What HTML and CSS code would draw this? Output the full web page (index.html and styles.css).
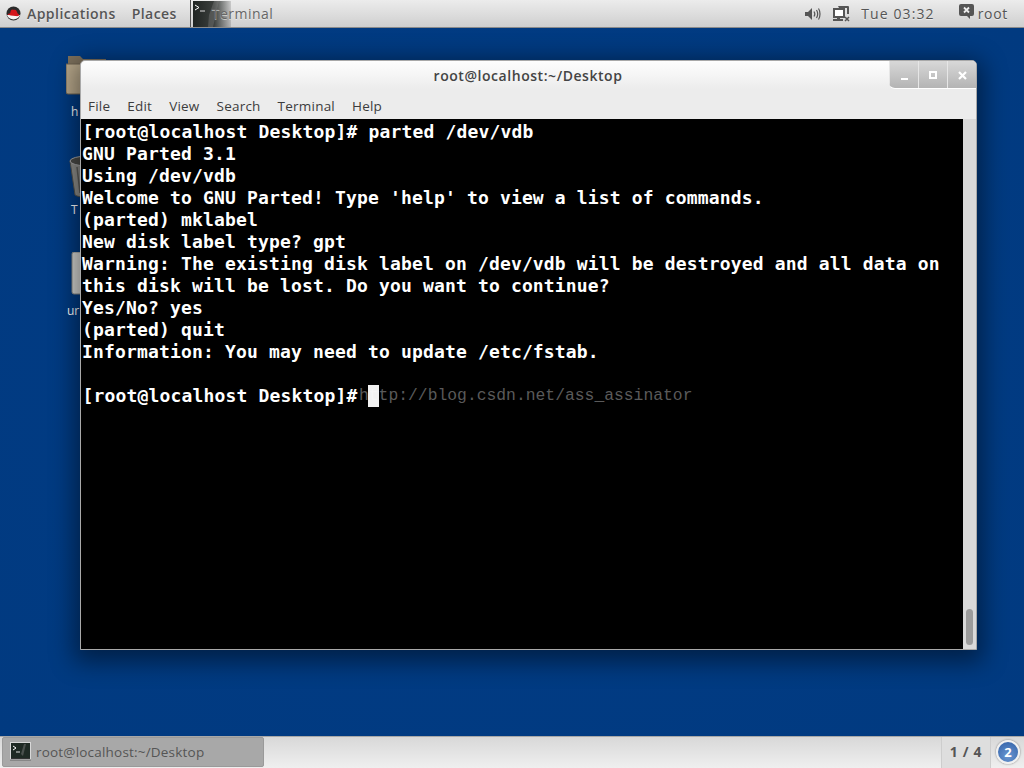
FILE: index.html
```html
<!DOCTYPE html>
<html lang="en">
<head>
<meta charset="utf-8">
<title>Desktop</title>
<link rel="stylesheet" href="styles.css">
</head>
<body>
<header class="top-panel">
  <div class="menu-item apps">
    <svg class="hat" width="15" height="15" viewBox="0 0 15 15"><circle cx="7.5" cy="7.5" r="7" fill="#2a2a2a"/><path d="M1 9a7 7 0 0 0 13 0z" fill="#f4f4f4"/><path d="M1.5 8.5c1-1 1.500-1 2.500-.8.500-1.500.500-3.500 2-4.200 1 .3 1.500.500 2.500.2 1.500-.2 2.500 1.500 3 3.500l1.500 1.500c.5 1-1 1.800-3.500 1.300-3-.4-6.500-.6-8-1.500z" fill="#d3161c"/></svg>
    <span>Applications</span>
  </div>
  <div class="menu-item places">Places</div>
  <div class="task-launch">
    <div class="launch-thumb">
      <svg width="38" height="26" viewBox="0 0 38 26"><path d="M2 4l4 2.500-4 2.500" fill="none" stroke="#fff" stroke-width="1"/><path d="M7 10h5" stroke="#ddd" stroke-width="1"/><path d="M16 14l5-14h5l-6 26h-5z" fill="#888" opacity=".35"/></svg>
    </div>
    <span class="launch-label">Terminal</span>
  </div>
  <div class="status">
    <svg class="st-sound" width="16" height="14" viewBox="0 0 16 14"><path d="M0 5h3l4-4v12l-4-4H0z" fill="#555"/><path d="M9 4.500c1 1.500 1 3.500 0 5M11.500 3c1.500 2.500 1.500 5.500 0 8M13.500 1.500c2 3 2 8 0 11" fill="none" stroke="#555" stroke-width="1.200"/></svg>
    <svg class="st-net" width="17" height="16" viewBox="0 0 17 16"><path d="M5 0h10a1 1 0 0 1 1 1v7h-2V2H6z" fill="#555"/><path d="M1 3h10v8H1z" fill="#fff" stroke="#555" stroke-width="2"/><path d="M0 13h10v2H0zM4 11h3v2H4z" fill="#555"/><path d="M12 11l4 4M16 11l-4 4" stroke="#555" stroke-width="1.500"/></svg>
    <span class="clock">Tue 03:32</span>
    <svg class="st-chat" width="15" height="15" viewBox="0 0 15 15"><path d="M2 0h11a2 2 0 0 1 2 2v8a2 2 0 0 1-2 2h-2v3l-3-3H2a2 2 0 0 1-2-2V2a2 2 0 0 1 2-2z" fill="#555"/><path d="M5 3.500l5 5M10 3.500l-5 5" stroke="#eee" stroke-width="1.800"/></svg>
    <span class="user">root</span>
  </div>
</header>

<main class="desktop">
  <div class="desk-icon icon-home">
    <svg width="44" height="44" viewBox="0 0 44 44"><path d="M2 3h12l3 3h23v12H2z" fill="#7d705c"/><path d="M0 11h42a1 1 0 0 1 1 1v29H2a2 2 0 0 1-2-2z" fill="#b9a98c" stroke="#6f6350"/></svg>
    <span class="desk-label">h</span>
  </div>
  <div class="desk-icon icon-trash">
    <svg width="44" height="44" viewBox="0 0 44 44"><path d="M1 6l5 34c4 3 20 3 26 0l5-34z" fill="#8f8f8b" stroke="#55554f"/><ellipse cx="19" cy="6" rx="18" ry="5" fill="#4b4b47" stroke="#aaa"/><path d="M8 12l3 26M15 13l1 26M23 13l-1 26M30 12l-3 26" stroke="#5e5e5a" stroke-width="1.500"/></svg>
    <span class="desk-label">T</span>
  </div>
  <div class="desk-icon icon-drive">
    <svg width="44" height="44" viewBox="0 0 44 44"><rect x="1" y="0" width="40" height="42" rx="2" fill="#d8d8d4" stroke="#8a8a86"/></svg>
    <span class="desk-label">ur</span>
  </div>

  <section class="window">
    <div class="titlebar">
      <span class="title">root@localhost:~/Desktop</span>
      <div class="win-buttons">
        <div class="win-btn"><span class="g-min"></span></div>
        <div class="win-btn"><span class="g-max"></span></div>
        <div class="win-btn">
          <svg width="9" height="9" viewBox="0 0 9 9"><path d="M1 1l7 7M8 1l-7 7" stroke="#fff" stroke-width="2.200"/></svg>
        </div>
      </div>
    </div>
    <nav class="menubar">
      <span>File</span><span>Edit</span><span>View</span><span>Search</span><span>Terminal</span><span>Help</span>
    </nav>
    <div class="term-wrap">
      <pre class="terminal"><span class="indent">[root@localhost Desktop]# parted /dev/vdb</span>
GNU Parted 3.1
Using /dev/vdb
Welcome to GNU Parted! Type 'help' to view a list of commands.
(parted) mklabel
New disk label type? gpt
Warning: The existing disk label on /dev/vdb will be destroyed and all data on
this disk will be lost. Do you want to continue?
Yes/No? yes
(parted) quit
Information: You may need to update /etc/fstab.

<span class="indent">[root@localhost Desktop]#</span></pre>
      <span class="watermark">http://blog.csdn.net/ass_assinator</span>
      <span class="cursor"></span>
      <div class="scrollbar"><div class="thumb"></div></div>
    </div>
  </section>
</main>

<footer class="bottom-panel">
  <div class="task">
    <svg width="21" height="19" viewBox="0 0 21 19"><rect x=".5" y=".5" width="20" height="17" fill="#333" stroke="#d8d8d8"/><rect x="1" y="1" width="19" height="15" fill="#1f2a24"/><path d="M3 4l3 2-3 2" fill="none" stroke="#fff"/><path d="M6 10h4" stroke="#ddd"/><path d="M11 12l3-10h2l-3 12z" fill="#777" opacity=".5"/><path d="M0 18h21" stroke="#666"/></svg>
    <span>root@localhost:~/Desktop</span>
  </div>
  <div class="pager">1 / 4</div>
  <div class="badge"><span>2</span></div>
</footer>
</body>
</html>
```

FILE: styles.css
```css
* { box-sizing: border-box; }
html, body { margin: 0; height: 100%; }
body {
  width: 1024px;
  height: 768px;
  overflow: hidden;
  display: flex;
  flex-direction: column;
  font-family: "Open Sans", "Noto Sans", sans-serif;
  background: #013a82;
}

/* top panel */
.top-panel {
  height: 28px;
  flex: none;
  display: flex;
  align-items: center;
  padding-left: 6px;
  background: linear-gradient(#ececec, #cfcfcf);
  border-bottom: 1px solid #8b8b8b;
  color: #555;
  font-size: 14px;
  font-weight: 600;
  letter-spacing: .45px;
  text-shadow: 0 1px 0 rgba(255,255,255,.5);
}
.menu-item { display: flex; align-items: center; }
.apps { gap: 6px; }
.hat { flex: none; }
.places { margin-left: 16px; }
.task-launch {
  position: relative;
  display: flex;
  align-items: center;
  height: 27px;
  margin-left: 13px;
  border-left: 1px solid #555;
  padding-left: 2px;
}
.launch-thumb {
  width: 38px;
  height: 26px;
  background: linear-gradient(90deg, #1f2422 0%, #3b3f3d 55%, rgba(80,80,80,.2) 100%);
}
.launch-label {
  margin-left: -19px;
  font-weight: 500;
  position: relative;
  color: #666;
}
.status {
  margin-left: auto;
  display: flex;
  align-items: center;
  font-weight: 500;
  padding-right: 16px;
}
.st-sound { margin-right: 12px; }
.st-net { margin-right: 11px; }
.clock { margin-right: 24px; letter-spacing: 1.1px; }
.st-chat { margin-right: 4px; margin-top: -4px; }
.user { letter-spacing: .7px; }

/* desktop */
.desktop {
  flex: 1;
  position: relative;
  background: radial-gradient(ellipse at 50% 50%, #013c86 0%, #013a80 100%);
}
.desk-icon {
  position: absolute;
  left: 66px;
  width: 44px;
  display: flex;
  flex-direction: column;
  align-items: flex-start;
  color: #fff;
  font-size: 12px;
}
.icon-home { top: 25px; }
.icon-trash { top: 127px; left: 69px; }
.icon-drive { top: 224px; left: 71px; }
.desk-label { margin-top: 5px; white-space: nowrap; }
.icon-home .desk-label { margin-left: 5px; margin-top: 6px; }
.icon-trash .desk-label { margin-left: 2px; margin-top: 2px; }
.icon-drive .desk-label { margin-left: -4px; margin-top: 6px; }

/* terminal window */
.window {
  position: absolute;
  left: 80px;
  top: 32px;
  width: 897px;
  height: 590px;
  display: flex;
  flex-direction: column;
  background: #ececec;
  border: 1px solid #a9a9a9;
  border-radius: 5px 5px 0 0;
  box-shadow: 0 6px 24px 6px rgba(0,0,0,.45);
}
.titlebar {
  height: 28px;
  flex: none;
  position: relative;
  display: flex;
  justify-content: center;
  align-items: center;
  background: linear-gradient(#fefefe, #ececec);
  border-radius: 5px 5px 0 0;
}
.title {
  font-size: 14px;
  font-weight: 600;
  letter-spacing: .55px;
  color: #444;
  margin-right: 1px;
}
.win-buttons {
  position: absolute;
  right: 0;
  top: 0;
  height: 28px;
  display: flex;
  border-radius: 0 4px 0 6px;
  overflow: hidden;
  border-bottom: 1px solid #fff;
  background: linear-gradient(#d8d8d8, #b4b4b4);
}
.win-btn {
  width: 29px;
  display: flex;
  align-items: center;
  justify-content: center;
  border-left: 1px solid #e6e6e6;
  padding-top: 1px;
}
.g-min { width: 7px; height: 2px; background: #fff; margin-top: 7px; }
.g-max { width: 8px; height: 8px; border: 2px solid #fff; }
.menubar {
  height: 30px;
  flex: none;
  display: flex;
  align-items: center;
  gap: 17px;
  padding: 3px 0 0 7px;
  font-size: 13.500px;
  letter-spacing: .22px;
  color: #3c3c3c;
  background: #ececec;
}
.term-wrap {
  flex: 1;
  position: relative;
  background: #000;
}
.terminal {
  margin: 0;
  padding: 2px 0 0 1px;
  font-family: "DejaVu Sans Mono", monospace;
  font-weight: 700;
  font-size: 18px;
  letter-spacing: .16px;
  line-height: 22px;
  color: #fff;
}
.indent { margin-left: .5px; }
.cursor {
  position: absolute;
  left: 287px;
  top: 266px;
  width: 11px;
  height: 22px;
  background: rgba(255,255,255,.95);
}
.watermark {
  position: absolute;
  left: 278px;
  top: 266px;
  font-family: "Liberation Mono", monospace;
  font-size: 16.350px;
  line-height: 22px;
  color: #5a5a5a;
}
.scrollbar {
  position: absolute;
  right: 0;
  top: 0;
  bottom: 0;
  width: 13px;
  background: #d9d9d9;
}
.thumb {
  position: absolute;
  left: 3px;
  bottom: 4px;
  width: 7px;
  height: 36px;
  border-radius: 4px;
  background: #9b9b9b;
}

/* bottom panel */
.bottom-panel {
  height: 32px;
  flex: none;
  display: flex;
  align-items: flex-start;
  padding: 0 0 0 2px;
  background: linear-gradient(#d8d8d8, #efefef);
  border-top: 1px solid #a8a8a8;
}
.task {
  width: 262px;
  height: 30px;
  display: flex;
  align-items: center;
  gap: 5px;
  padding: 0 0 1px 7px;
  background: #a8a8a8;
  border: 1px solid #9a9a9a;
  border-radius: 2px;
  font-size: 13.500px;
  font-weight: 500;
  letter-spacing: .2px;
  color: #555;
}
.pager {
  margin-left: auto;
  width: 50px;
  height: 31px;
  display: flex;
  align-items: center;
  justify-content: center;
  padding-bottom: 2px;
  background: #dedede;
  border-left: 1px solid #cdcdcd;
  border-right: 1px solid #cdcdcd;
  font-size: 14px;
  font-weight: 700;
  letter-spacing: .7px;
  color: #555;
}
.badge {
  width: 24px;
  height: 24px;
  margin: 3px 4px 0 5px;
  border-radius: 50%;
  border: 2px solid #f1f1f1;
  background: radial-gradient(circle at 50% 70%, #6b97d2, #2f5fa6);
  box-shadow: 0 0 2px rgba(0,0,0,.5);
  color: #fff;
  font-size: 13px;
  font-weight: 700;
  display: flex;
  align-items: center;
  justify-content: center;
}
```
